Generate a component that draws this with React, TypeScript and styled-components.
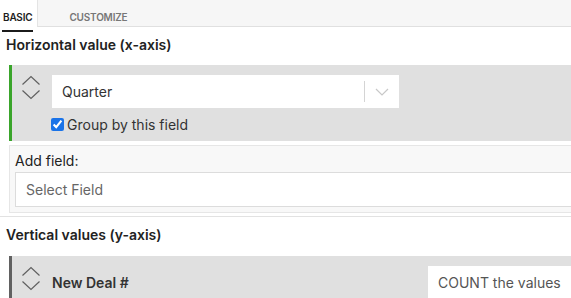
import React from 'react'
import styled, { createGlobalStyle } from 'styled-components'

const GlobalStyle = createGlobalStyle`
  html, body {
    margin: 0;
    padding: 0;
    overflow: hidden;
    background: #fff;
  }
  body {
    font-family: Inter, "Noto Sans", "Liberation Sans", sans-serif;
    color: #222;
  }
  * {
    box-sizing: border-box;
  }
`

const Page = styled.div`
  width: 580px;
`

const TabBar = styled.div`
  display: flex;
  height: 27px;
`

const Tab = styled.div<{ active?: boolean; grow?: boolean }>`
  flex: ${(p) => (p.grow ? 1 : 'none')};
  height: 27px;
  padding: ${(p) => (p.active ? '5px 4px 0 2px' : '5px 30px 0')};
  background: ${(p) => (p.active ? '#fff' : '#f6f6f6')};
  border-left: ${(p) => (p.active ? 'none' : '1px solid #e4e4e4')};
  border-bottom: ${(p) => (p.active ? 'none' : '1px solid #e0e0e0')};
`

const TabLabel = styled.span<{ active?: boolean }>`
  display: inline-block;
  font-size: 10px;
  line-height: 12px;
  font-weight: 600;
  letter-spacing: -0.2px;
  color: ${(p) => (p.active ? '#1d1d1d' : '#777')};
  padding: 0 1px 7px;
  border-bottom: 2px solid ${(p) => (p.active ? '#1b1b1b' : 'transparent')};
`

const SectionTitle = styled.div<{ divided?: boolean }>`
  height: ${(p) => (p.divided ? '40px' : '38px')};
  padding: 9px 6px 0;
  font-size: 14px;
  line-height: 17px;
  font-weight: 600;
  color: #222;
  border-top: ${(p) => (p.divided ? '1px solid #e2e2e2' : 'none')};
  margin-top: ${(p) => (p.divided ? '-1px' : '0')};
`

const FieldCard = styled.div<{ accent: string }>`
  display: flex;
  align-items: flex-start;
  gap: 11px;
  margin-left: 9px;
  padding: 10px 0 8px 9px;
  background: #e0e0e0;
  border-left: 3px solid ${(p) => p.accent};
`

const Mover = styled.svg`
  flex: none;
  width: 20px;
  height: 25px;
`

const FieldBody = styled.div`
  display: flex;
  flex-direction: column;
  flex: 1;
`

const SelectBox = styled.div`
  display: flex;
  align-items: center;
  width: 347px;
  height: 33px;
  background: #fff;
  padding-left: 10px;
  font-size: 14px;
  color: #333;
`

const SelectValue = styled.span`
  flex: 1;
`

const Divider = styled.span`
  width: 1px;
  height: 21px;
  background: #d4d4d4;
`

const Caret = styled.svg`
  width: 34px;
  height: 10px;
`

const CheckRow = styled.label`
  display: flex;
  align-items: center;
  gap: 3px;
  margin-top: 8px;
  font-size: 14px;
  line-height: 17px;
  color: #333;
`

const Check = styled.input`
  width: 13px;
  height: 13px;
  margin: 0 0 0 -1px;
  accent-color: #1a73e8;
`

const AddBox = styled.div`
  margin: 4px 0 4px 9px;
  padding: 6px 0 5px 5px;
  background: #f8f8f8;
  border: 1px solid #e6e6e6;
  border-right: none;
`

const AddLabel = styled.div`
  font-size: 14px;
  line-height: 17px;
  color: #222;
  margin-bottom: 3px;
`

const FieldInput = styled.div`
  height: 35px;
  display: flex;
  align-items: center;
  padding-left: 10px;
  background: #fff;
  border: 1px solid #dcdcdc;
  border-right: none;
  font-size: 14px;
  color: #666;
`

const FieldName = styled.div`
  flex: 1;
  height: 33px;
  display: flex;
  align-items: center;
  font-size: 14px;
  font-weight: 600;
  color: #333;
`

const Aggregate = styled.div`
  width: 152px;
  height: 33px;
  display: flex;
  align-items: center;
  padding-left: 10px;
  background: #fff;
  font-size: 14px;
  color: #555;
`

const MoverIcon = () => (
  <Mover viewBox="0 0 20 25">
    <path d="M1.5 9.5 L10 1.5 L18.5 9.5" fill="none" stroke="#606060" strokeWidth="1.2" />
    <path d="M1.5 15.5 L10 23.5 L18.5 15.5" fill="none" stroke="#606060" strokeWidth="1.2" />
  </Mover>
)

export default function App() {
  return (
    <Page>
      <GlobalStyle />
      <TabBar>
        <Tab active>
          <TabLabel active>BASIC</TabLabel>
        </Tab>
        <Tab grow>
          <TabLabel>CUSTOMIZE</TabLabel>
        </Tab>
      </TabBar>

      <SectionTitle>Horizontal value (x-axis)</SectionTitle>
      <FieldCard accent="#3aa52b">
        <MoverIcon />
        <FieldBody>
          <SelectBox>
            <SelectValue>Quarter</SelectValue>
            <Divider />
            <Caret viewBox="0 0 34 10">
              <path d="M11 2 L17 8 L23 2" fill="none" stroke="#c8c8c8" strokeWidth="1.2" />
            </Caret>
          </SelectBox>
          <CheckRow>
            <Check type="checkbox" defaultChecked />
            Group by this field
          </CheckRow>
        </FieldBody>
      </FieldCard>

      <AddBox>
        <AddLabel>Add field:</AddLabel>
        <FieldInput>Select Field</FieldInput>
      </AddBox>

      <SectionTitle divided>Vertical values (y-axis)</SectionTitle>
      <FieldCard accent="#616161">
        <MoverIcon />
        <FieldName>New Deal #</FieldName>
        <Aggregate>COUNT the values</Aggregate>
      </FieldCard>
    </Page>
  )
}
